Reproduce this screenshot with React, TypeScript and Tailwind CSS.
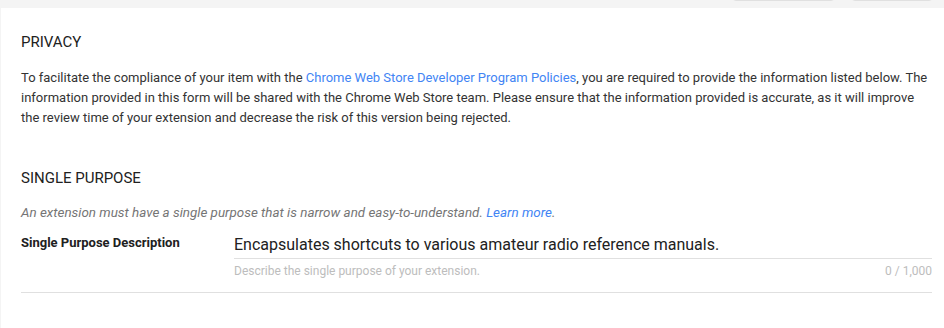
export default function App() {
  return (
    <div className="w-[944px] h-[328px] overflow-hidden bg-[#f4f4f4] font-['Roboto',sans-serif]">
      {/* Top toolbar remnants */}
      <div className="h-[8px] relative">
        <div className="absolute left-[732px] top-[-10px] w-[103px] h-[11px] border border-[#e0e0e0] rounded-sm bg-[#f4f4f4]" />
        <div className="absolute left-[851px] top-[-10px] w-[82px] h-[11px] border border-[#e0e0e0] rounded-sm bg-[#f4f4f4]" />
      </div>

      <div className="ml-px bg-white h-[320px] pl-5 pr-3 pt-[24px]">
        {/* Privacy */}
        <h2 className="text-[15px] leading-[20px] text-[#212121] uppercase">Privacy</h2>
        <p className="mt-[16px] text-[13px] leading-[20px] text-[#333]">
          To facilitate the compliance of your item with the{' '}
          <a className="text-[#4285f4]">Chrome Web Store Developer Program Policies</a>, you are required to
          provide the information listed below. The information provided in this form will be shared with the
          Chrome Web Store team. Please ensure that the information provided is accurate, as it will improve the
          review time of your extension and decrease the risk of this version being rejected.
        </p>

        {/* Single purpose */}
        <h2 className="mt-[40px] text-[15px] leading-[20px] text-[#212121] uppercase">Single Purpose</h2>
        <p className="mt-[17px] text-[13.4px] leading-[16px] italic text-[#757575]">
          An extension must have a single purpose that is narrow and easy-to-understand.{' '}
          <a className="text-[#4285f4]">Learn more</a>.
        </p>

        <div className="mt-[14px] flex border-b border-[#e0e0e0] pb-[14px]">
          <div className="w-[213px] shrink-0 text-[13px] leading-[16px] font-bold text-[#212121]">
            Single Purpose Description
          </div>
          <div className="flex-1">
            <div className="border-b border-[#e0e0e0] pb-[3px] text-[16px] leading-[20px] text-[#212121]">
              Encapsulates shortcuts to various amateur radio reference manuals.
            </div>
            <div className="mt-[5px] flex justify-between text-[12px] leading-[14px] text-[#bdbdbd]">
              <span>Describe the single purpose of your extension.</span>
              <span>0 / 1,000</span>
            </div>
          </div>
        </div>
      </div>
    </div>
  )
}
